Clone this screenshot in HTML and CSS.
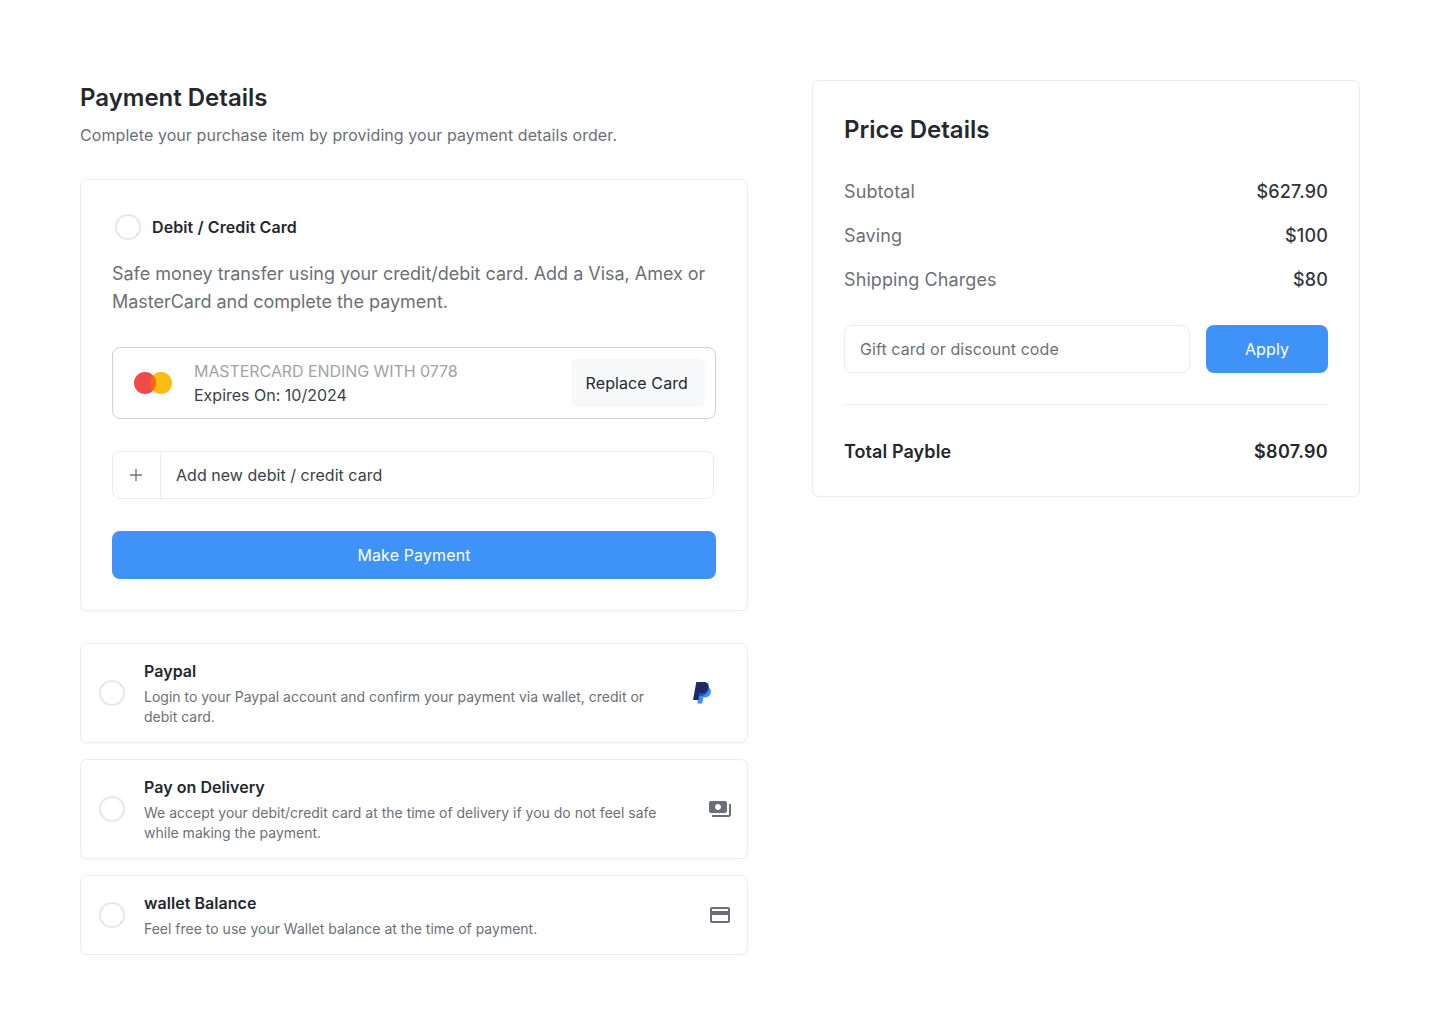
FILE: index.html
```html
<!DOCTYPE html>
<html>
<head>
  <title>Payment Details</title>

  <link rel="stylesheet" href="styles.css">
</head>
<body>
  <div class="container">
    <div class="left">
      <h1>Payment Details</h1>
      <p class="intro">Complete your purchase item by providing your payment details order.</p>

      <div class="box debit">
        <div class="debit-head">
          <span class="radio"></span>
          <span class="debit-title">Debit / Credit Card</span>
        </div>
        <p class="debit-text">Safe money transfer using your credit/debit card. Add a Visa, Amex or MasterCard and complete the payment.</p>

        <div class="saved-card">
          <svg class="mc" width="38" height="22" viewBox="0 0 38 22">
            <circle cx="27" cy="11" r="11" fill="#fbbc14"/>
            <circle cx="11" cy="11" r="11" fill="#f14a4a"/>
            <path d="M19 3.450A11 11 0 0 1 19 18.550A11 11 0 0 1 19 3.450z" fill="#fb6a10"/>
          </svg>
          <div class="saved-info">
            <div class="saved-name">MASTERCARD ENDING WITH 0778</div>
            <div class="saved-exp">Expires On: 10/2024</div>
          </div>
          <button class="replace">Replace Card</button>
        </div>

        <div class="add-card">
          <span class="add-icon">
            <svg width="14" height="14" viewBox="0 0 14 14"><path d="M7 1v12M1 7h12" stroke="#6b7280" stroke-width="1.400" fill="none"/></svg>
          </span>
          <span class="add-label">Add new debit / credit card</span>
        </div>

        <button class="btn pay">Make Payment</button>
      </div>

      <div class="box option">
        <span class="radio"></span>
        <div class="option-body">
          <div class="option-title">Paypal</div>
          <p class="option-text">Login to your Paypal account and confirm your payment via wallet, credit or debit card.</p>
        </div>
        <svg class="option-icon paypal" width="18" height="22" viewBox="0 0 18 22">
          <path d="M15.500 5.500c1.800.9 2.700 2.600 2.300 4.900-.6 3.300-2.900 5.100-6.300 5.100h-1.300L9.200 21.500H4.300L5.500 13z" fill="#3b8ff5"/>
          <path d="M3.300 0h6.900c3.900 0 6.200 1.900 5.500 5.700-.7 3.800-3.400 6-7 6H6.400l-1 6.300H0z" fill="#1f2a6b"/>
          <path d="M15.600 6c-.8 3.600-3.400 5.700-6.900 5.700H6.400l-.4 2.300c5 .5 9-2.500 9.600-8z" fill="#1f4fb0"/>
        </svg>
      </div>

      <div class="box option">
        <span class="radio"></span>
        <div class="option-body">
          <div class="option-title">Pay on Delivery</div>
          <p class="option-text">We accept your debit/credit card at the time of delivery if you do not feel safe while making the payment.</p>
        </div>
        <svg class="option-icon" width="24" height="24" viewBox="0 0 24 24">
          <path fill="#6c7076" d="M19 14V6c0-1.100-.9-2-2-2H3c-1.100 0-2 .9-2 2v8c0 1.100.9 2 2 2h14c1.100 0 2-.9 2-2zm-9-1c-1.660 0-3-1.340-3-3s1.340-3 3-3 3 1.340 3 3-1.340 3-3 3zm13-6v11c0 1.100-.9 2-2 2H4v-2h17V7h2z"/>
        </svg>
      </div>

      <div class="box option">
        <span class="radio"></span>
        <div class="option-body">
          <div class="option-title">wallet Balance</div>
          <p class="option-text">Feel free to use your Wallet balance at the time of payment.</p>
        </div>
        <svg class="option-icon" width="24" height="24" viewBox="0 0 24 24">
          <path fill="#6c7076" d="M20 4H4c-1.110 0-1.990.89-1.990 2L2 18c0 1.110.89 2 2 2h16c1.110 0 2-.89 2-2V6c0-1.110-.89-2-2-2zm0 14H4v-6h16v6zm0-10H4V6h16v2z"/>
        </svg>
      </div>
    </div>

    <div class="box price">
      <h2>Price Details</h2>
      <div class="price-row"><span class="price-label">Subtotal</span><span class="price-value">$627.90</span></div>
      <div class="price-row"><span class="price-label">Saving</span><span class="price-value">$100</span></div>
      <div class="price-row"><span class="price-label">Shipping Charges</span><span class="price-value">$80</span></div>

      <div class="coupon">
        <input class="coupon-input" type="text" placeholder="Gift card or discount code">
        <button class="btn apply">Apply</button>
      </div>

      <div class="total">
        <span>Total Payble</span>
        <span class="total-value">$807.90</span>
      </div>
    </div>
  </div>
</body>
</html>
```

FILE: styles.css
```css
body {
  font-family: Inter, Arial, sans-serif;
  margin: 0;
  padding: 0;
  background-color: #fff;
  color: #25282c;
}

.container {
  display: flex;
  align-items: flex-start;
  justify-content: space-between;
  padding: 80px 80px 0;
}

.left {
  width: 668px;
}

.box {
  box-sizing: border-box;
  background-color: #fff;
  border: 1px solid #ebedf0;
  border-radius: 7px;
  box-shadow: 0 1px 2px rgba(17, 24, 39, 0.03);
}

h1 {
  margin: 0;
  padding-top: 2px;
  font-size: 24px;
  line-height: 32px;
  font-weight: 600;
  color: #25282c;
}

.intro {
  margin: 9px 0 0;
  font-size: 16px;
  line-height: 24px;
  letter-spacing: 0.075px;
  color: #6c7076;
}

.debit {
  margin-top: 32px;
  padding: 31px;
}

.debit-head {
  display: flex;
  align-items: center;
  margin-top: 3px;
  padding-left: 3px;
}

.radio {
  flex: none;
  box-sizing: border-box;
  width: 26px;
  height: 26px;
  border: 2px solid #e5e7eb;
  border-radius: 50%;
  background-color: #fff;
}

.debit-title {
  margin-left: 11px;
  font-size: 16px;
  font-weight: 600;
  letter-spacing: 0.1px;
  color: #25282c;
}

.debit-text {
  margin: 20px 0 0;
  font-size: 18px;
  line-height: 28px;
  letter-spacing: -0.02px;
  color: #6c7076;
}

.saved-card {
  display: flex;
  align-items: center;
  box-sizing: border-box;
  height: 72px;
  margin-top: 31px;
  padding: 0 10px 0 21px;
  border: 1px solid #ced1d6;
  border-radius: 8px;
}

.mc {
  flex: none;
}

.saved-info {
  flex: 1;
  margin-left: 22px;
  font-size: 16px;
  line-height: 24px;
}

.saved-name {
  letter-spacing: -0.07px;
  color: #a0a3a9;
}

.saved-exp {
  color: #3c4046;
}

.replace {
  height: 48px;
  padding: 0 17px 0 15px;
  border: none;
  border-radius: 6px;
  background-color: #f7f8f9;
  font-family: Inter, Arial, sans-serif;
  font-size: 16px;
  letter-spacing: 0.1px;
  color: #25282c;
}

.add-card {
  display: flex;
  align-items: center;
  box-sizing: border-box;
  width: 602px;
  height: 48px;
  margin-top: 32px;
  border: 1px solid #ebedf0;
  border-radius: 8px;
}

.add-icon {
  display: flex;
  align-items: center;
  justify-content: center;
  box-sizing: border-box;
  width: 48px;
  height: 100%;
  padding-right: 1px;
  border-right: 1px solid #ebedf0;
}

.add-label {
  margin-left: 15px;
  font-size: 16px;
  letter-spacing: 0.03px;
  color: #3c4046;
}

.btn {
  border: none;
  border-radius: 8px;
  background-color: #3f93f8;
  color: #fff;
  font-family: Inter, Arial, sans-serif;
  font-size: 16px;
  font-weight: 400;
  letter-spacing: 0.12px;
}

.pay {
  display: block;
  width: 100%;
  height: 48px;
  margin-top: 32px;
}

.option {
  display: flex;
  align-items: center;
  margin-top: 16px;
  padding: 15px 15px 15px 18px;
}

.debit + .option {
  margin-top: 32px;
}

.option-body {
  flex: 1;
  margin-left: 19px;
}

.option-title {
  font-size: 16px;
  line-height: 24px;
  font-weight: 600;
  letter-spacing: 0.05px;
  color: #25282c;
}

.option-text {
  margin: 4px 0 0;
  max-width: 530px;
  font-size: 14px;
  line-height: 20px;
  color: #6c7076;
}

.option-icon {
  flex: none;
}

.paypal {
  margin-right: 21px;
}

.price {
  width: 548px;
  height: 417px;
  padding: 31px;
}

h2 {
  margin: 0 0 30px;
  font-size: 24px;
  line-height: 36px;
  font-weight: 600;
  color: #25282c;
}

.price-row {
  display: flex;
  justify-content: space-between;
  margin-bottom: 16px;
  font-size: 18px;
  line-height: 28px;
}

.price-label {
  letter-spacing: 0.1px;
  color: #6c7076;
}

.price-value {
  letter-spacing: 0.15px;
  color: #33373c;
  font-weight: 500;
}

.coupon {
  display: flex;
  gap: 16px;
  margin-top: 31px;
}

.coupon-input {
  flex: 1;
  min-width: 0;
  box-sizing: border-box;
  height: 48px;
  padding: 0 15px;
  border: 1px solid #ebedf0;
  border-radius: 8px;
  font-family: Inter, Arial, sans-serif;
  font-size: 16px;
  letter-spacing: 0.08px;
  outline: none;
}

.coupon-input::placeholder {
  color: #6c7076;
  opacity: 1;
}

.apply {
  width: 122px;
  height: 48px;
}

.total {
  display: flex;
  justify-content: space-between;
  margin-top: 31px;
  padding-top: 33px;
  border-top: 1px solid #ebedf0;
  font-size: 18px;
  line-height: 28px;
  font-weight: 600;
  letter-spacing: 0.08px;
  color: #25282c;
}

.total-value {
  letter-spacing: 0.3px;
}
```
